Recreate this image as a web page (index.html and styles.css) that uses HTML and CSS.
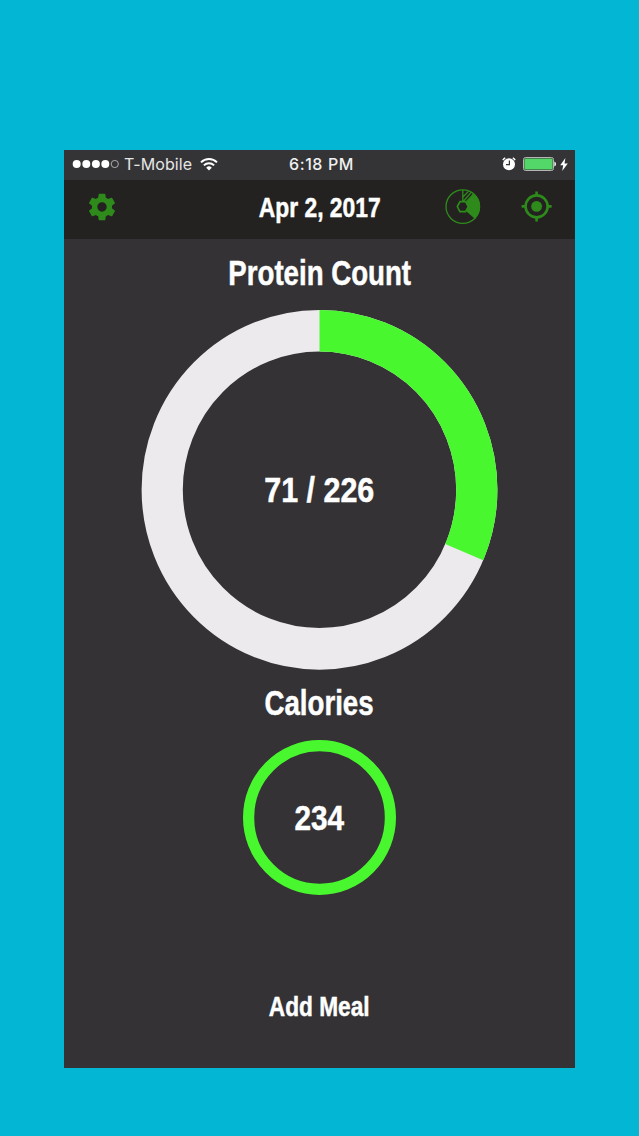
FILE: index.html
```html
<!DOCTYPE html>
<html lang="en">
  <head>
    <meta charset="UTF-8" />
    <meta name="viewport" content="width=device-width, initial-scale=1.0" />
    <title>Protein Count</title>
    <link rel="stylesheet" href="styles.css">
  </head>
  <body>
    <div class="screen">
      <!-- Status bar -->
      <div class="status-bar">
        <div class="status-left">
          <svg class="signal" width="47" height="10" viewBox="0 0 47 10">
            <circle cx="4.7" cy="5" r="4" />
            <circle cx="14.3" cy="5" r="4" />
            <circle cx="23.9" cy="5" r="4" />
            <circle cx="33.3" cy="5" r="4" />
            <circle class="signal-empty" cx="42.8" cy="5" r="3.6" />
          </svg>
          <span class="carrier">T-Mobile</span>
          <svg class="wifi" width="18" height="13" viewBox="0 0 18 13">
            <path d="M1 4.4a11.4 11.4 0 0 1 16 0" />
            <path d="M3.9 7.4a7.3 7.3 0 0 1 10.2 0" />
            <path class="wifi-dot" d="M9 12.6L6.2 9.7a4 4 0 0 1 5.6 0z" />
          </svg>
        </div>
        <span class="clock">6:18 PM</span>
        <div class="status-right">
          <svg width="14" height="14" viewBox="0 0 14 14">
            <circle cx="7" cy="7.3" r="6" fill="#fff" />
            <path d="M.8 3.2A8 8 0 0 1 3.2 .9M10.8 .9a8 8 0 0 1 2.4 2.3" stroke="#fff" stroke-width="1.3" fill="none" />
            <path d="M7.4 3.6v4H4" stroke="#343436" stroke-width="1.2" fill="none" />
          </svg>
          <svg class="battery" width="33" height="14" viewBox="0 0 33 14">
            <rect x=".5" y=".5" width="30" height="13" rx="2" fill="#343436" stroke="#b5b5b5" />
            <rect x="1.4" y="1.4" width="28.2" height="11.2" rx="1" fill="#53d769" />
            <path d="M31.4 4.5q1.6.5 1.6 2.5t-1.6 2.5z" fill="#fff" />
          </svg>
          <svg width="8" height="13" viewBox="0 0 8 13">
            <path d="M5.4 0L.2 7.2h3L2.2 13l5.6-7.6H4.5z" fill="#fff" />
          </svg>
        </div>
      </div>

      <!-- Navbar -->
      <div class="navbar">
        <svg class="icon" width="32" height="32" viewBox="0 0 24 24">
          <path fill="#2e8b1b" d="M19.43 12.98c.04-.32.07-.64.07-.98s-.03-.66-.07-.98l2.11-1.65c.19-.15.24-.42.12-.64l-2-3.46c-.12-.22-.39-.3-.61-.22l-2.49 1c-.52-.4-1.08-.73-1.69-.98l-.38-2.65C14.46 2.18 14.25 2 14 2h-4c-.25 0-.46.18-.49.42l-.38 2.65c-.61.25-1.17.59-1.69.98l-2.49-1c-.23-.09-.49 0-.61.22l-2 3.46c-.13.22-.07.49.12.64l2.11 1.65c-.04.32-.07.65-.07.98s.03.66.07.98l-2.11 1.65c-.19.15-.24.42-.12.64l2 3.46c.12.22.39.3.61.22l2.49-1c.52.4 1.08.73 1.69.98l.38 2.65c.03.24.24.42.49.42h4c.25 0 .46-.18.49-.42l.38-2.65c.61-.25 1.17-.59 1.69-.98l2.49 1c.23.09.49 0 .61-.22l2-3.46c.12-.22.07-.49-.12-.64l-2.11-1.65zM12 15.5c-1.93 0-3.5-1.57-3.5-3.5s1.57-3.5 3.5-3.5 3.5 1.57 3.5 3.5-1.57 3.5-3.5 3.5z" />
        </svg>
        <h1 class="date"><span>Apr 2, 2017</span></h1>
        <div class="nav-right">
          <!-- Pie chart -->
          <svg class="icon" width="36" height="36" viewBox="0 0 36 36" fill="none" stroke="#2e8b1b" stroke-width="1.3">
            <path fill="#2e8b1b" stroke="none" d="M28.8 4.7A17 17 0 0 1 30 30L21 22L23 17.5L21 13.6z" />
            <circle cx="17.8" cy="17.6" r="16.8" />
            <path d="M17.8 1v11.6M18 8l5.4-5.6M18.4 12.2l7.6-8.6M20.6 13.4l8.2-8.7" />
            <path d="M15 12.6h5.6l2.7 5-2.7 5H15l-2.7-5z" fill="#232221" stroke-width="1.7" />
          </svg>
          <!-- Target -->
          <svg class="icon" width="32" height="32" viewBox="0 0 32 32" fill="none" stroke="#2e8b1b">
            <circle cx="15.6" cy="15.4" r="11" stroke-width="2.6" />
            <path d="M15.6 .4v4M15.6 26.4v4M.6 15.4h4M26.6 15.4h4" stroke-width="2.6" />
            <circle cx="15.6" cy="15.4" r="5.4" fill="#2e8b1b" stroke="none" />
          </svg>
        </div>
      </div>

      <!-- Protein -->
      <h2 class="heading"><span>Protein Count</span></h2>
      <div class="ring protein">
        <svg width="356" height="360" viewBox="0 0 356 356" preserveAspectRatio="none">
          <circle cx="177.5" cy="177.8" r="157.3" stroke="#eceaec" />
          <circle cx="177.5" cy="177.8" r="157.3" stroke="#49f72f" pathLength="226" stroke-dasharray="71 155" transform="rotate(-90 177.5 177.8)" />
        </svg>
        <p class="value protein-value">71 / 226</p>
      </div>

      <!-- Calories -->
      <h2 class="heading calories-heading"><span>Calories</span></h2>
      <div class="ring calories">
        <svg width="153" height="155" viewBox="0 0 153 153" preserveAspectRatio="none">
          <circle cx="76.5" cy="76.5" r="70.9" stroke="#49f72f" />
        </svg>
        <p class="value">234</p>
      </div>

      <div class="add-meal"><span>Add Meal</span></div>
    </div>
  </body>
</html>
```

FILE: styles.css
```css
* {
  margin: 0;
  padding: 0;
  box-sizing: border-box;
}

body {
  height: 1136px;
  padding: 150px 64px 68px;
  background: #03b6d3;
  font-family: "Liberation Sans", Arial, sans-serif;
  color: #fff;
  overflow: hidden;
}

svg {
  display: block;
  overflow: visible;
}

.screen {
  display: flex;
  flex-direction: column;
  align-items: center;
  width: 511px;
  height: 918px;
  background: #343234;
}

/* Status bar */
.status-bar {
  display: grid;
  grid-template-columns: 1fr auto 1fr;
  align-items: center;
  width: 100%;
  height: 30px;
  padding: 0 7px 2px 8px;
  background: #343436;
  font-family: Inter, Roboto, sans-serif;
  font-size: 16px;
}

.status-left,
.status-right {
  display: flex;
  align-items: center;
}

.status-right {
  justify-content: flex-end;
  gap: 6px;
}

.signal {
  fill: #fff;
}

.signal-empty {
  fill: none;
  stroke: #c8c8c8;
  stroke-width: 0.8;
}

.carrier {
  margin: 0 8px 0 5px;
  color: #e6e6e6;
  letter-spacing: 0.1px;
}

.wifi {
  fill: none;
  stroke: #fff;
  stroke-width: 2;
}

.wifi-dot {
  fill: #fff;
  stroke: none;
}

.clock {
  padding-left: 3px;
  color: #f0f0f0;
  font-weight: 500;
  letter-spacing: 0.6px;
}

.battery {
  margin: 0 -2px 0 1px;
}

/* Navbar */
.navbar {
  display: grid;
  grid-template-columns: 1fr auto 1fr;
  align-items: center;
  width: 100%;
  height: 59px;
  padding: 0 22px 6px;
  background: #232221;
}

.nav-right {
  display: flex;
  align-items: center;
  justify-content: flex-end;
  gap: 40px;
}

/* Condensed bold lettering */
.date span,
.heading span,
.value,
.add-meal span {
  display: block;
  font-weight: bold;
  white-space: nowrap;
  transform: scaleX(0.79);
  -webkit-text-stroke: 0.5px #fff;
}

.date span {
  padding-top: 2px;
  font-size: 28px;
  line-height: 52px;
  transform: scaleX(0.815);
}

.heading {
  height: 71px;
  font-size: 35px;
  line-height: 68px;
}

.calories-heading {
  height: 70px;
  line-height: 66px;
}

.ring {
  display: grid;
  place-items: center;
}

.ring > * {
  grid-area: 1 / 1;
}

.ring circle {
  fill: none;
}

.protein circle {
  stroke-width: 41.2;
}

.calories circle {
  stroke-width: 11.2;
}

.value {
  font-size: 35px;
  line-height: 40px;
  transform: scaleX(0.85);
}

.protein-value {
  transform: scaleX(0.87);
}

.add-meal {
  margin-top: 92px;
  font-size: 28px;
  line-height: 40px;
}

.add-meal span {
  transform: scaleX(0.81);
}
```
